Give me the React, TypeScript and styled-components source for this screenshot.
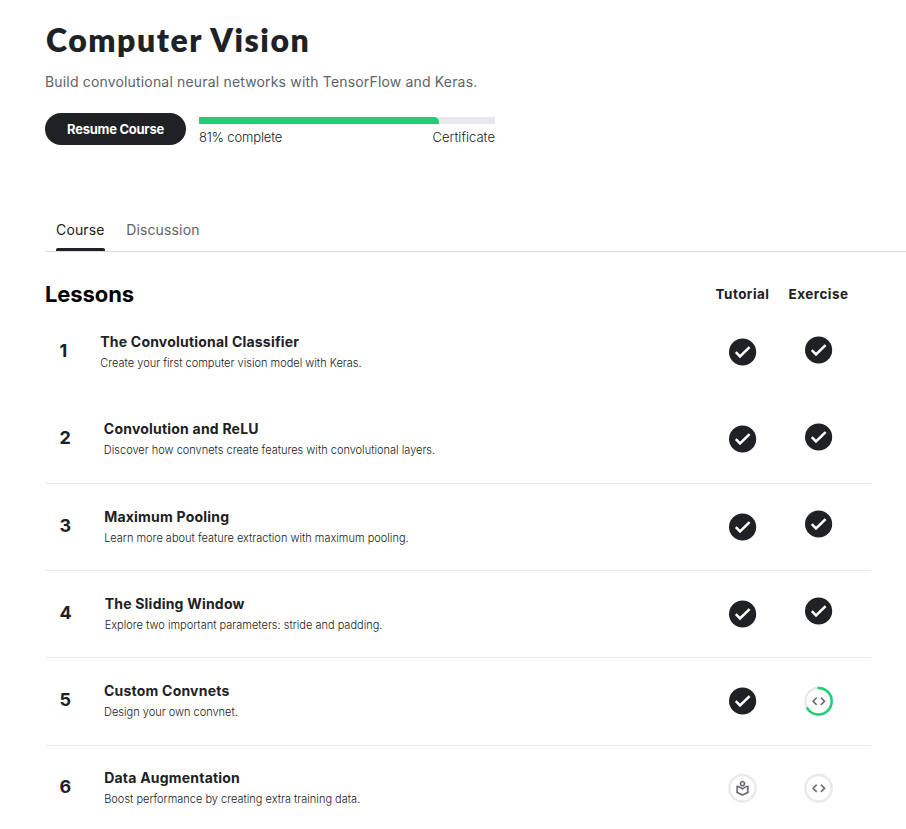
import React from "react";
import styled, { createGlobalStyle } from "styled-components";

const ink = "#202124";
const muted = "#5f6368";
const green = "#20ce75";
const track = "#e8eaed";

const GlobalStyle = createGlobalStyle`
  * { box-sizing: border-box; }
  body {
    margin: 0;
    background: #fff;
    color: ${ink};
    font-family: Inter, "Liberation Sans", sans-serif;
  }
`;

const Page = styled.main`
  height: 829px;
  padding: 20px 0 0 45px;
  overflow: hidden;
`;

const Title = styled.h1`
  margin: 0;
  padding-left: 1px;
  font: 800 32px/40px Lato, sans-serif;
  letter-spacing: 1.55px;
`;

const Subtitle = styled.p`
  margin: 12px 0 0;
  font-size: 14px;
  font-weight: 400;
  line-height: 20px;
  letter-spacing: 0.17px;
  color: ${muted};
`;

const Actions = styled.div`
  display: flex;
  align-items: flex-start;
  gap: 13px;
  margin-top: 21px;
`;

const ResumeButton = styled.button`
  width: 141px;
  height: 32px;
  padding: 0;
  border: 0;
  border-radius: 16px;
  background: ${ink};
  color: #fff;
  font: 700 13px/31px Inter, sans-serif;
  letter-spacing: -0.26px;
`;

const Progress = styled.div`
  width: 296px;
  padding-top: 4px;
`;

const Track = styled.div`
  height: 7px;
  background: #e8e8ee;
`;

const Fill = styled.div`
  height: 100%;
  border-top-right-radius: 5px;
  background: ${green};
`;

const ProgressLabels = styled.div`
  display: flex;
  justify-content: space-between;
  margin-top: 3px;
  font-size: 13px;
  font-weight: 300;
  line-height: 20px;
`;

const CompleteLabel = styled.span`
  letter-spacing: -0.14px;
`;

const CertificateLabel = styled.span`
  letter-spacing: 0.04px;
`;

const Tabs = styled.nav`
  display: flex;
  gap: 21.5px;
  height: 43px;
  margin-top: 62px;
  padding-left: 11px;
  border-bottom: 1px solid #dadce0;
`;

const Tab = styled.a<{ $active?: boolean }>`
  display: flex;
  flex-direction: column;
  justify-content: space-between;
  font-size: 14px;
  font-weight: 400;
  line-height: 42px;
  letter-spacing: 0.15px;
  color: ${(p) => (p.$active ? ink : muted)};

  &::after {
    content: "";
    height: 3px;
    margin-top: -3px;
    border-radius: 2px 2px 0 0;
    background: ${(p) => (p.$active ? ink : "transparent")};
  }
`;

const LessonsHeader = styled.header`
  display: flex;
  align-items: center;
  width: 826px;
  height: 57.4px;
  padding: 27px 14.5px 0 0;
`;

const LessonsTitle = styled.h2`
  flex: 1;
  margin: 0;
  color: #000;
  font-size: 22px;
  font-weight: 650;
  line-height: 30px;
  letter-spacing: -0.1px;
`;

const ColumnTitle = styled.div`
  width: 76px;
  text-align: center;
  white-space: nowrap;
  font-size: 13.5px;
  font-weight: 650;
  letter-spacing: 0.45px;
`;

const LessonList = styled.ol`
  width: 826px;
  margin: 0;
  padding: 0;
  list-style: none;
`;

const LessonRow = styled.li<{ $divided: boolean }>`
  display: flex;
  align-items: center;
  height: 87.25px;
  padding: 0 15px 0 14.5px;
  border-bottom: 1px solid ${(p) => (p.$divided ? track : "transparent")};
`;

const LessonNumber = styled.div`
  margin: -2.8px 33px 0 0;
  font-size: 18px;
  font-weight: 700;
  line-height: 24px;
`;

const LessonText = styled.div`
  flex: 1;
  padding-bottom: 1px;
`;

const LessonTitle = styled.h3`
  margin: 0;
  font-size: 14px;
  font-weight: 650;
  line-height: 20px;
  letter-spacing: 0.21px;
`;

const LessonSummary = styled.p`
  margin: 2px 0 0;
  font-size: 11px;
  font-weight: 300;
  line-height: 18px;
`;

const StatusCell = styled.div<{ $raise: number }>`
  display: flex;
  justify-content: center;
  width: 76px;
  padding-bottom: ${(p) => p.$raise * 2}px;
`;

const Icon = styled.svg`
  display: block;
`;

type Status = "done" | "partial" | "code" | "reading";

function StatusIcon({ status }: { status: Status }) {
  if (status === "done") {
    return (
      <Icon width="32" height="32" viewBox="-.6 0 32 32" fill="none" aria-label="Complete">
        <circle cx="16" cy="16" r="13.6" fill={ink} />
        <path d="M9.2 16.1 13.4 20.4 23 11.1" stroke="#fff" strokeWidth="2.5" />
      </Icon>
    );
  }
  return (
    <Icon width="30" height="30" viewBox="-.5 -.3 30 30" fill="none">
      <circle cx="15" cy="15" r="13.2" stroke="#e8eaed" strokeWidth="2.5" />
      {status === "partial" && (
        <circle
          cx="15"
          cy="15"
          r="13.2"
          pathLength="100"
          stroke={green}
          strokeWidth="2.5"
          strokeLinecap="round"
          strokeDasharray="66 100"
          transform="rotate(-90 15 15)"
        />
      )}
      {status === "reading" ? (
        <g transform="translate(7 7) scale(.6667)" fill={muted} stroke={muted} strokeWidth=".4">
          <path d="M16 5c0-2.210-1.790-4-4-4S8 2.790 8 5s1.790 4 4 4 4-1.790 4-4zm-4 2c-1.100 0-2-.9-2-2s.9-2 2-2 2 .9 2 2-.9 2-2 2zM3 8v11l9 4 9-4V8c-3.480 0-6.640 1.350-9 3.550C9.640 9.350 6.480 8 3 8zm16 9.700-7 3.110-7-3.110v-7.450c2.100.38 4.050 1.350 5.640 2.830L12 14.280l1.360-1.270c1.590-1.480 3.540-2.450 5.640-2.830v7.520z" />
        </g>
      ) : (
        <g transform="translate(7.3 7) scale(.6667)" fill={muted} stroke={muted} strokeWidth=".4">
          <path d="M9.400 16.600 4.800 12l4.600-4.600L8 6l-6 6 6 6 1.400-1.400zm5.200 0 4.600-4.600-4.600-4.600L16 6l6 6-6 6-1.400-1.400z" />
        </g>
      )}
    </Icon>
  );
}

const lessons: { title: string; summary: string; tutorial: Status; exercise: Status }[] = [
  { title: "The Convolutional Classifier", summary: "Create your first computer vision model with Keras.", tutorial: "done", exercise: "done" },
  { title: "Convolution and ReLU", summary: "Discover how convnets create features with convolutional layers.", tutorial: "done", exercise: "done" },
  { title: "Maximum Pooling", summary: "Learn more about feature extraction with maximum pooling.", tutorial: "done", exercise: "done" },
  { title: "The Sliding Window", summary: "Explore two important parameters: stride and padding.", tutorial: "done", exercise: "done" },
  { title: "Custom Convnets", summary: "Design your own convnet.", tutorial: "done", exercise: "partial" },
  { title: "Data Augmentation", summary: "Boost performance by creating extra training data.", tutorial: "reading", exercise: "code" },
];

export default function App() {
  const percent = 81;
  return (
    <>
      <GlobalStyle />
      <Page>
        <Title>Computer Vision</Title>
        <Subtitle>Build convolutional neural networks with TensorFlow and Keras.</Subtitle>
        <Actions>
          <ResumeButton>Resume Course</ResumeButton>
          <Progress>
            <Track>
              <Fill style={{ width: `${percent}%` }} />
            </Track>
            <ProgressLabels>
              <CompleteLabel>{percent}% complete</CompleteLabel>
              <CertificateLabel>Certificate</CertificateLabel>
            </ProgressLabels>
          </Progress>
        </Actions>
        <Tabs>
          <Tab $active>Course</Tab>
          <Tab>Discussion</Tab>
        </Tabs>
        <LessonsHeader>
          <LessonsTitle>Lessons</LessonsTitle>
          <ColumnTitle>Tutorial</ColumnTitle>
          <ColumnTitle>Exercise</ColumnTitle>
        </LessonsHeader>
        <LessonList>
          {lessons.map((lesson, i) => (
            <LessonRow key={lesson.title} $divided={i > 0}>
              <LessonNumber>{i + 1}</LessonNumber>
              <LessonText>
                <LessonTitle>{lesson.title}</LessonTitle>
                <LessonSummary>{lesson.summary}</LessonSummary>
              </LessonText>
              <StatusCell $raise={0.3}>
                <StatusIcon status={lesson.tutorial} />
              </StatusCell>
              <StatusCell $raise={lesson.exercise === "done" ? 2.8 : 0.3}>
                <StatusIcon status={lesson.exercise} />
              </StatusCell>
            </LessonRow>
          ))}
        </LessonList>
      </Page>
    </>
  );
}
